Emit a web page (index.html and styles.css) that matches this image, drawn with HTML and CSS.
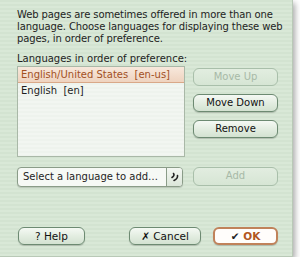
FILE: index.html
```html
<!DOCTYPE html>
<html>
<head>
<meta charset="utf-8">
<link rel="stylesheet" href="styles.css">
</head>
<body>
<div class="window">
  <p class="intro">Web pages are sometimes offered in more than one<br>language. Choose languages for displaying these web<br>pages, in order of preference.</p>
  <div class="label">Languages in order of preference:</div>
  <div class="main">
    <div class="list">
      <div class="row selected">English/United States&nbsp; [en-us]</div>
      <div class="row">English&nbsp; [en]</div>
    </div>
    <div class="side">
      <div class="btn disabled">Move Up</div>
      <div class="btn">Move Down</div>
      <div class="btn">Remove</div>
    </div>
  </div>
  <div class="addrow">
    <div class="popup">
      <span class="ptext">Select a language to add…</span>
      <span class="parrow"><svg width="10" height="10" viewBox="0 0 10 10"><path d="M3.5 1.5 Q5 3.5 2 5.5 M7.5 3.5 Q8 6.5 4 8.5" fill="none" stroke="#222" stroke-width="1.6" stroke-linecap="round"/></svg></span>
    </div>
    <div class="btn disabled add">Add</div>
  </div>
  <div class="bottom">
    <div class="btn help"><span class="q">?</span> Help</div>
    <div class="btn cancel"><span class="x">✗</span> Cancel</div>
    <div class="btn ok"><span class="chk">✔</span> OK</div>
  </div>
</div>
</body>
</html>
```
FILE: styles.css
```css
html, body {
  margin: 0;
  padding: 0;
  background: #ffffff;
}
body {
  font-family: "DejaVu Sans", sans-serif;
  font-size: 10px;
  color: #1e1e1e;
}
.window {
  width: 293px;
  height: 257px;
  box-sizing: border-box;
  padding: 9px 0 0 17px;
  background: repeating-linear-gradient(to bottom, #d3e3d1 0 2px, #d9e8d7 2px 4px);
  box-shadow: 2px 3px 6px rgba(0,0,0,0.35);
  border-right: 1px solid #b9c9b7;
  border-bottom: 1px solid #b9c9b7;
}
.intro {
  margin: 0;
  white-space: nowrap;
  letter-spacing: -0.1px;
  line-height: 12px;
}
.label {
  margin-top: 8px;
  line-height: 12px;
}
.main {
  display: flex;
  gap: 8px;
  margin-top: 1px;
}
.list {
  width: 168px;
  height: 91px;
  box-sizing: border-box;
  border: 1px solid #a9b8a7;
  background: repeating-linear-gradient(to bottom, #eef3ed 0 2px, #f2f6f1 2px 4px);
}
.row {
  height: 15px;
  line-height: 15px;
  padding-left: 3px;
}
.row.selected {
  color: #a2501f;
  background: linear-gradient(to bottom, #f7e8dc, #efd3bf);
  border-bottom: 1px solid #d9a888;
}
.side {
  display: flex;
  flex-direction: column;
  gap: 8px;
  padding-top: 2px;
}
.btn {
  box-sizing: border-box;
  width: 85px;
  height: 18px;
  line-height: 16px;
  text-align: center;
  border: 1px solid #6d8a72;
  border-radius: 6px;
  background: linear-gradient(to bottom, #f5f9f4 0%, #e3ede1 50%, #d3e2d1 100%);
  box-shadow: 0 1px 1px rgba(0,0,0,0.18);
  color: #111;
}
.btn.disabled {
  color: #a7b9a7;
  border-color: #a9bfaa;
  background: linear-gradient(to bottom, #e2ede0, #d6e5d4);
  box-shadow: none;
}
.addrow {
  display: flex;
  gap: 10px;
  margin-top: 10px;
}
.popup {
  width: 166px;
  height: 20px;
  box-sizing: border-box;
  display: flex;
  border: 1px solid #8a9c88;
  border-radius: 4px;
  background: #f6f9f5;
  box-shadow: 0 1px 1px rgba(0,0,0,0.15);
}
.ptext {
  flex: 1;
  line-height: 18px;
  padding-left: 5px;
}
.parrow {
  width: 15px;
  border-left: 1px solid #8a9c88;
  display: flex;
  align-items: center;
  justify-content: center;
  background: linear-gradient(to bottom, #f3f7f2, #dbe6d9);
  border-radius: 0 3px 3px 0;
}
.add {
  height: 19px;
  margin-top: 0;
}
.bottom {
  display: flex;
  margin-top: 40px;
  padding-left: 1px;
}
.help {
  width: 67px;
  font-size: 10.5px;
}
.cancel {
  width: 72px;
  margin-left: 44px;
  font-size: 10.5px;
}
.ok {
  width: 65px;
  margin-left: 12px;
  border: 2px solid #c0825a;
  background: #fffdfb;
  color: #b2561d;
  font-weight: bold;
  line-height: 14px;
  font-size: 10.5px;
}
.x { font-style: italic; }
.chk { color: #222; font-weight: normal; }
```
